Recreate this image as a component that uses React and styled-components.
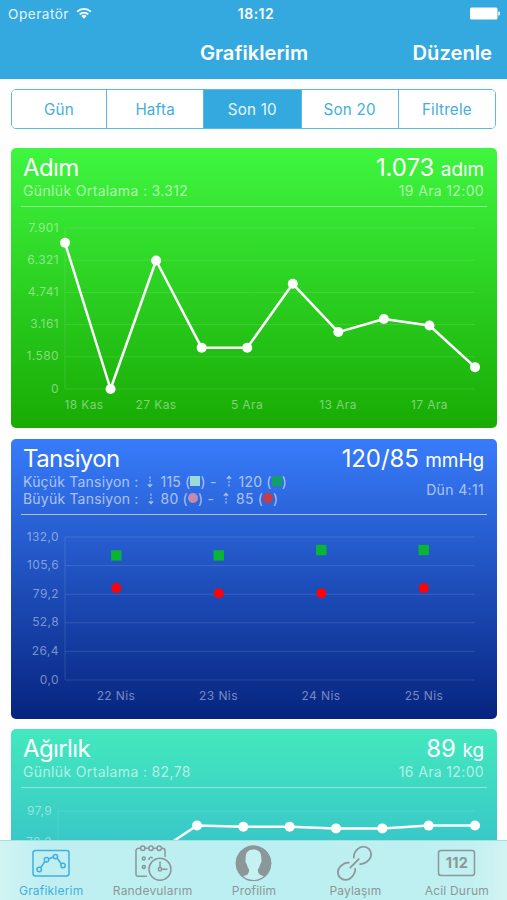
import { Fragment } from 'react'
import styled, { createGlobalStyle } from 'styled-components'

const GlobalStyle = createGlobalStyle`
    * {
        box-sizing: border-box;
    }
    body {
        margin: 0;
        background: #fff;
        font-family: Inter, "Liberation Sans", sans-serif;
    }
`

const Screen = styled.div`
    width: 507px;
    height: 900px;
    display: flex;
    flex-direction: column;
    overflow: hidden;
    background: #fefefe;
`

const Header = styled.header`
    height: 79px;
    flex: none;
    background: #33a9df;
    color: #fff;
`

const StatusBar = styled.div`
    height: 27px;
    padding: 0 7px 0 8px;
    display: grid;
    grid-template-columns: 1fr auto 1fr;
    align-items: center;
    font-size: 13.6px;
`

const Carrier = styled.div`
    display: flex;
    align-items: center;
    gap: 7px;
    color: #e3f4fc;
    letter-spacing: 0.5px;
`

const Clock = styled.div`
    font-weight: 600;
    font-size: 14px;
    letter-spacing: 0.5px;
    padding-left: 4px;
`

const Battery = styled.svg`
    justify-self: end;
`

const NavBar = styled.div`
    height: 51px;
    padding: 0 15px 0 16px;
    display: grid;
    grid-template-columns: 1fr auto 1fr;
    align-items: center;
    font-size: 20.2px;
    font-weight: 600;
`

const NavTitle = styled.h1`
    grid-column: 2;
    margin: 0;
    font: inherit;
`

const NavAction = styled.div`
    justify-self: end;
`

const Segments = styled.div`
    flex: none;
    height: 40px;
    margin: 10px 11px 19px;
    display: grid;
    grid-template-columns: 94px repeat(4, 1fr);
    border: 1.5px solid #5cb9e4;
    border-radius: 5px;
    overflow: hidden;
`

const Segment = styled.div`
    display: flex;
    align-items: center;
    justify-content: center;
    font-size: 15.2px;
    letter-spacing: 0.2px;
    color: ${props => props.$active ? '#e6f6fd' : '#43aee0'};
    background: ${props => props.$active ? '#33a9df' : '#fff'};
    & + & {
        border-left: 1.5px solid #5cb9e4;
    }
`

const CardList = styled.main`
    flex: 1;
    min-height: 0;
    overflow: hidden;
    padding: 0 10px 0 11px;
    display: flex;
    flex-direction: column;
    gap: 10.5px;
`

const Card = styled.section`
    flex: none;
    height: 280px;
    border-radius: 5px;
    color: #fff;
    background: ${props => props.$background};
`

const CardHead = styled.div`
    height: ${props => props.$height}px;
    margin: 0 10px;
    padding: 4px 3px 0 2px;
    display: flex;
    justify-content: space-between;
    border-bottom: 1.5px solid ${props => props.$rule};
`

const HeadSide = styled.div`
    display: flex;
    flex-direction: column;
    align-items: ${props => props.$end ? 'flex-end' : 'flex-start'};
`

const CardTitle = styled.h2`
    margin: 0;
    height: 30px;
    font-size: 24px;
    font-weight: 400;
    line-height: 31px;
    letter-spacing: -0.6px;
    white-space: nowrap;
`

const CardValue = styled(CardTitle)`
    letter-spacing: -0.1px;
`

const Unit = styled.span`
    font-size: 19px;
`

const Detail = styled.div`
    font-size: 14px;
    line-height: 17px;
    letter-spacing: 0.35px;
    white-space: pre;
    margin-top: ${props => props.$offset || 0}px;
    color: rgba(255, 255, 255, 0.6);
`

const Range = styled(Detail)`
    display: flex;
    align-items: center;
    letter-spacing: 0.2px;
`

const Arrow = styled.svg`
    margin: 0 6px 0 8px;
`

const Mark = styled.span`
    width: 10px;
    height: 10px;
    border-radius: ${props => props.$round ? '50%' : '0'};
    background: ${props => props.$color};
`

const Plot = styled.svg`
    display: block;
    width: 486px;
    height: ${props => props.$height}px;
`

const AxisText = styled.text`
    font-size: 12px;
    letter-spacing: 0.4px;
    fill: rgba(255, 255, 255, 0.45);
`

const TabBar = styled.nav`
    flex: none;
    height: 60px;
    display: grid;
    grid-template-columns: repeat(5, 1fr);
    border-top: 1px solid #a5dfe0;
    background: linear-gradient(90deg, #d2f4f3 0, #c0eff1 40px, #bbeff1 250px, #c0f0f1 467px, #d2f4f3 100%);
`

const Tab = styled.div`
    display: flex;
    flex-direction: column;
    align-items: center;
    padding: 2px 0 0 1px;
    font-size: 12px;
    line-height: 14px;
    letter-spacing: 0.2px;
    color: ${props => props.$active ? '#41afe0' : '#8c979a'};
`

const TabLabel = styled.span`
    margin-top: -1px;
`

const steps = {
    left: 54,
    top: 21,
    bottom: 182,
    max: 7901,
    ticks: ['7.901', '6.321', '4.741', '3.161', '1.580', '0'],
    values: [7175, 0, 6306, 2022, 2022, 5163, 2793, 3435, 3116, 1073],
    labels: [[73, '18 Kas'], [145, '27 Kas'], [236, '5 Ara'], [327, '13 Ara'], [418.5, '17 Ara']],
}

// only the top two ticks of this card are above the tab bar
const weight = {
    left: 47,
    top: 23,
    bottom: 182,
    max: 97.9,
    ticks: ['97,9', '78,3', '', '', '', ''],
    values: [52, 60, 70, 89, 88.2, 88.2, 87.2, 87.2, 88.9, 89],
    labels: [],
}

const pressure = {
    left: 54,
    top: 22,
    bottom: 165,
    max: 132,
    ticks: ['132,0', '105,6', '79,2', '52,8', '26,4', '0,0'],
    values: [[115, 85], [115, 80], [120, 80], [120, 85]],
    labels: [[105, '22 Nis'], [207.5, '23 Nis'], [310, '24 Nis'], [413, '25 Nis']],
}

const RIGHT = 464

function Axes({ chart }) {
    const gap = (chart.bottom - chart.top) / (chart.ticks.length - 1)
    return (
        <>
            <path d={`M${chart.left} ${chart.top}V${chart.bottom}`} stroke="#fff" strokeOpacity="0.12" />
            {chart.ticks.map((tick, i) => {
                const y = chart.top + gap * i
                return (
                    <Fragment key={i}>
                        <path d={`M${chart.left} ${y}H${RIGHT}`} stroke="#fff" strokeOpacity="0.12" />
                        {tick && <AxisText x={chart.left - 6} y={y + 3.5} textAnchor="end">{tick}</AxisText>}
                    </Fragment>
                )
            })}
            {chart.labels.map(([x, label]) => (
                <AxisText key={label} x={x} y={chart.bottom + 19.5} textAnchor="middle">{label}</AxisText>
            ))}
        </>
    )
}

function LineChart({ chart }) {
    const stepX = (RIGHT - chart.left) / (chart.values.length - 1)
    const points = chart.values.map((value, i) => [
        chart.left + stepX * i,
        chart.bottom - (value / chart.max) * (chart.bottom - chart.top),
    ])
    return (
        <Plot $height={220} viewBox="0 0 486 220">
            <Axes chart={chart} />
            <polyline points={points.join(' ')} fill="none" stroke="#fff" strokeWidth="2.5" strokeLinejoin="round" />
            {points.map(([x, y]) => <circle key={x} cx={x} cy={y} r="5" fill="#fff" />)}
        </Plot>
    )
}

function PressureChart({ chart }) {
    const stepX = (RIGHT - chart.left) / chart.values.length
    const toY = value => chart.bottom - (value / chart.max) * (chart.bottom - chart.top)
    return (
        <Plot $height={203} viewBox="0 0 486 203">
            <Axes chart={chart} />
            {chart.values.map(([high, low], i) => {
                const x = chart.left + stepX * (i + 0.5)
                return (
                    <Fragment key={x}>
                        <rect x={x - 5.2} y={toY(high) - 5.2} width="10.4" height="10.4" fill="#08b535" />
                        <circle cx={x} cy={toY(low)} r="5" fill="#fe0208" />
                    </Fragment>
                )
            })}
        </Plot>
    )
}

function DashedArrow({ up }) {
    return (
        <Arrow width="8" height="13" viewBox="0 0 8 13" fill="none" stroke="currentColor" strokeWidth="1.2">
            {up
                ? <path d="M1.8 3.6L4 1.3 6.2 3.6M4 1.5V4.5M4 6V7.7M4 9.2V11.5" />
                : <path d="M1.8 9.4L4 11.7 6.2 9.4M4 11.5V8.500M4 7V5.3M4 3.8V1.5" />}
        </Arrow>
    )
}

function PressureRange({ label, low, high, lowColor, highColor, round }) {
    return (
        <Range>
            {label} :<DashedArrow />{low} (<Mark $round={round} $color={lowColor} />) -
            <DashedArrow up />{high} (<Mark $round={round} $color={highColor} />)
        </Range>
    )
}

function CardHeader({ title, value, unit, date, children, height = 59, dateOffset, rule = 'rgba(255, 255, 255, 0.4)' }) {
    return (
        <CardHead $height={height} $rule={rule}>
            <HeadSide>
                <CardTitle>{title}</CardTitle>
                {children}
            </HeadSide>
            <HeadSide $end>
                <CardValue>{value} <Unit>{unit}</Unit></CardValue>
                <Detail $offset={dateOffset}>{date}</Detail>
            </HeadSide>
        </CardHead>
    )
}

const iconProps = { width: 42, height: 42, viewBox: '0 0 42 42', fill: 'none', stroke: 'currentColor', strokeWidth: 1.5 }

function ChartIcon() {
    return (
        <svg {...iconProps}>
            <rect x="3" y="7.500" width="36" height="25.500" rx="2.500" />
            <path d="M10.500 24.800L15 18.500M18.500 16L23 14M27 15L31.500 21" />
            <circle cx="9.200" cy="26.500" r="2.200" />
            <circle cx="16.500" cy="16.700" r="2.200" />
            <circle cx="25.400" cy="13.600" r="2.200" />
            <circle cx="33" cy="22.500" r="2.200" />
        </svg>
    )
}

function CalendarIcon() {
    return (
        <svg {...iconProps}>
            <path d="M8.500 5.300H6.500a2.500 2.500 0 0 0-2.500 2.500V31.500a1.800 1.800 0 0 0 1.800 1.800H15M13 5.300H16.500M21.500 5.300H25M29.500 5.300H30.500a2.500 2.500 0 0 1 2.500 2.500V14" />
            <circle cx="10.800" cy="5.300" r="2.200" />
            <circle cx="19" cy="5.300" r="2.200" />
            <circle cx="27.200" cy="5.300" r="2.200" />
            <circle cx="11.800" cy="15.500" r="1.500" />
            <circle cx="11.800" cy="24" r="1.500" />
            <path d="M17.300 17A1.700 1.700 0 1 1 20.500 15.300" />
            <circle cx="28" cy="26.200" r="11" />
            <path d="M28 18.500V24.500M29.700 26.200H35.500" />
            <circle cx="28" cy="26.200" r="1.700" />
        </svg>
    )
}

function ProfileIcon() {
    return (
        <svg {...iconProps}>
            <circle cx="20.500" cy="20.300" r="17.700" fill="currentColor" stroke="none" />
            <path d="M20.500 6.500c-5.500 0-8 3.500-7.800 8.500 0 1.500-.5 2-.1 3.800.3 1.500 1 1.700 1.200 2.500.5 2.500 1.500 4 2.200 5 .2 2.700-.3 4.700-2.500 5.700-1.800.8-3.500 1-4.500 2A17 17 0 0 0 20.500 37.500a17 17 0 0 0 11.500-3.500c-1-1-2.700-1.200-4.500-2-2.200-1-2.700-3-2.500-5.700.7-1 1.700-2.500 2.200-5 .2-.8.900-1 1.200-2.500.4-1.800-.1-2.300-.1-3.800C28.500 10 26 6.500 20.500 6.500z" fill="#c4f1f2" stroke="none" />
            <circle cx="20.500" cy="20.300" r="17.200" strokeWidth="1.2" />
        </svg>
    )
}

function LinkIcon() {
    return (
        <svg {...iconProps} strokeWidth="1.8" strokeLinecap="round">
            <g transform="translate(20.500 20.300) rotate(-45)">
                <path d="M3.500 -4.500C5.500 -7 9 -7.800 12.500 -7.800a7.800 7.800 0 0 1 0 15.600C9 7.800 5.500 7 3.500 4.500" />
                <path d="M-3.500 -4.500C-5.500 -7 -9 -7.800 -12.500 -7.800a7.800 7.800 0 0 0 0 15.600C-9 7.800 -5.500 7 -3.500 4.500" />
                <path d="M-6 0H6" />
            </g>
        </svg>
    )
}

function EmergencyIcon() {
    return (
        <svg {...iconProps}>
            <rect x="2.500" y="7.500" width="36" height="25" rx="2.500" />
            <text x="21" y="25.300" textAnchor="middle" fontSize="14.500" fontWeight="700" fill="currentColor" stroke="none" letterSpacing="0.3">112</text>
        </svg>
    )
}

const tabs = [
    { label: 'Grafiklerim', icon: <ChartIcon />, active: true },
    { label: 'Randevularım', icon: <CalendarIcon /> },
    { label: 'Profilim', icon: <ProfileIcon /> },
    { label: 'Paylaşım', icon: <LinkIcon /> },
    { label: 'Acil Durum', icon: <EmergencyIcon /> },
]

const periods = ['Gün', 'Hafta', 'Son 10', 'Son 20', 'Filtrele']

function App() {
    return (
        <Screen>
            <GlobalStyle />
            <Header>
                <StatusBar>
                    <Carrier>
                        Operatör
                        <svg width="16" height="13" viewBox="0 0 16 13" fill="none" stroke="#fff" strokeWidth="1.8">
                            <path d="M1.200 4.700a9.600 9.600 0 0 1 13.600 0M3.700 7.300a6.100 6.100 0 0 1 8.600 0" />
                            <path d="M8 11.800L5.300 9.100a3.800 3.800 0 0 1 5.400 0z" fill="#fff" stroke="none" />
                        </svg>
                    </Carrier>
                    <Clock>18:12</Clock>
                    <Battery width="31" height="13" viewBox="0 0 31 13" fill="#fff">
                        <rect x="1" y="0.500" width="27.500" height="12" rx="1.500" />
                        <path d="M29.300 4.500a2 2 0 0 1 0 4z" />
                    </Battery>
                </StatusBar>
                <NavBar>
                    <NavTitle>Grafiklerim</NavTitle>
                    <NavAction>Düzenle</NavAction>
                </NavBar>
            </Header>
            <Segments>
                {periods.map(period => (
                    <Segment key={period} $active={period === 'Son 10'}>{period}</Segment>
                ))}
            </Segments>
            <CardList>
                <Card $background="linear-gradient(#3ff63f, #18ab04)">
                    <CardHeader title="Adım" value="1.073" unit="adım" date="19 Ara 12:00">
                        <Detail>Günlük Ortalama : 3.312</Detail>
                    </CardHeader>
                    <LineChart chart={steps} />
                </Card>
                <Card $background="linear-gradient(#387cfb, #06247f)">
                    <CardHeader title="Tansiyon" value="120/85" unit="mmHg" date="Dün 4:11" height={76.5} dateOffset={8} rule="rgba(255, 255, 255, 0.6)">
                        <PressureRange label="Küçük Tansiyon" low="115" high="120" lowColor="#9bdcd6" highColor="#139f68" />
                        <PressureRange label="Büyük Tansiyon" low="80" high="85" lowColor="#c78aae" highColor="#cc3a43" round />
                    </CardHeader>
                    <PressureChart chart={pressure} />
                </Card>
                <Card $background="linear-gradient(#43e9bd, #39c8c8 40%, #2a9fd2)">
                    <CardHeader title="Ağırlık" value="89" unit="kg" date="16 Ara 12:00">
                        <Detail>Günlük Ortalama : 82,78</Detail>
                    </CardHeader>
                    <LineChart chart={weight} />
                </Card>
            </CardList>
            <TabBar>
                {tabs.map(tab => (
                    <Tab key={tab.label} $active={tab.active}>
                        {tab.icon}
                        <TabLabel>{tab.label}</TabLabel>
                    </Tab>
                ))}
            </TabBar>
        </Screen>
    )
}

export default App
